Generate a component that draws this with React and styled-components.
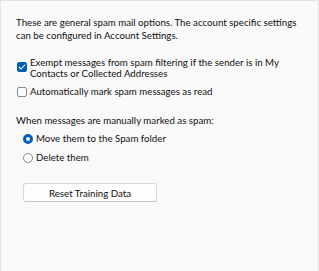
import React, { useState } from 'react'
import styled, { createGlobalStyle } from 'styled-components'

const GlobalStyle = createGlobalStyle`
  html, body {
    margin: 0;
    padding: 0;
    background: #f9f9f9;
  }
  * {
    box-sizing: border-box;
  }
`

const Panel = styled.div`
  width: 319px;
  height: 271px;
  background: #f9f9f9;
  border: 1px solid #e3e3e3;
  border-bottom: none;
  padding: 15px 15px 0 15px;
  font-family: Lato, "Noto Sans", sans-serif;
  font-size: 9.7px;
  line-height: 13px;
  color: #111;
  display: flex;
  flex-direction: column;
`

const Intro = styled.p`
  margin: 0 0 16px 0;
  line-height: 12.5px;
`

const CheckRow = styled.label`
  display: flex;
  align-items: flex-start;
  gap: 3px;
  margin-bottom: ${p => p.$gap || 0}px;
  line-height: 11px;
  cursor: default;
`

const Box = styled.span`
  flex: none;
  width: 10px;
  height: 10px;
  margin-top: ${p => p.$top || 0}px;
  margin-left: 1px;
  border-radius: 2px;
  border: 1px solid ${p => (p.$checked ? '#005fb8' : '#8b8b8b')};
  background: ${p => (p.$checked ? '#005fb8' : '#fbfbfb')};
  display: flex;
  align-items: center;
  justify-content: center;
  svg {
    width: 8px;
    height: 8px;
  }
`

const Label = styled.span`
  flex: 1;
`

const GroupTitle = styled.div`
  margin: 0 0 5px 0;
`

const RadioList = styled.div`
  display: flex;
  flex-direction: column;
  gap: 6px;
  padding-left: 7px;
`

const RadioRow = styled.label`
  display: flex;
  align-items: center;
  gap: 3px;
`

const Radio = styled.span`
  flex: none;
  width: 10px;
  height: 10px;
  border-radius: 50%;
  border: ${p => (p.$checked ? '3px solid #005fb8' : '1px solid #8b8b8b')};
  background: #fdfdfd;
`

const ResetButton = styled.button`
  align-self: flex-start;
  margin: 19px 0 0 7px;
  width: 134px;
  height: 19px;
  background: #fdfdfd;
  border: 1px solid #d6d6d6;
  border-bottom-color: #c4c4c4;
  border-radius: 3px;
  font-family: inherit;
  font-size: 9.7px;
  color: #111;
  padding: 0;
`

const Check = () => (
  <svg viewBox="0 0 8 8" fill="none">
    <path d="M1.2 4.2 L3.1 6 L6.8 2" stroke="#fff" strokeWidth="1.1" strokeLinecap="round" strokeLinejoin="round" />
  </svg>
)

export default function App() {
  const [exempt, setExempt] = useState(true)
  const [markRead, setMarkRead] = useState(false)
  const [action, setAction] = useState('move')

  return (
    <>
      <GlobalStyle />
      <Panel>
        <Intro>
          These are general spam mail options. The account specific settings can be configured in Account Settings.
        </Intro>
        <CheckRow $gap={7} onClick={() => setExempt(!exempt)}>
          <Box $checked={exempt} $top={5}>{exempt && <Check />}</Box>
          <Label>Exempt messages from spam filtering if the sender is in My Contacts or Collected Addresses</Label>
        </CheckRow>
        <CheckRow $gap={17} onClick={() => setMarkRead(!markRead)}>
          <Box $checked={markRead} $top={1}>{markRead && <Check />}</Box>
          <Label>Automatically mark spam messages as read</Label>
        </CheckRow>
        <GroupTitle>When messages are manually marked as spam:</GroupTitle>
        <RadioList>
          <RadioRow onClick={() => setAction('move')}>
            <Radio $checked={action === 'move'} />
            Move them to the Spam folder
          </RadioRow>
          <RadioRow onClick={() => setAction('delete')}>
            <Radio $checked={action === 'delete'} />
            Delete them
          </RadioRow>
        </RadioList>
        <ResetButton type="button">Reset Training Data</ResetButton>
      </Panel>
    </>
  )
}
